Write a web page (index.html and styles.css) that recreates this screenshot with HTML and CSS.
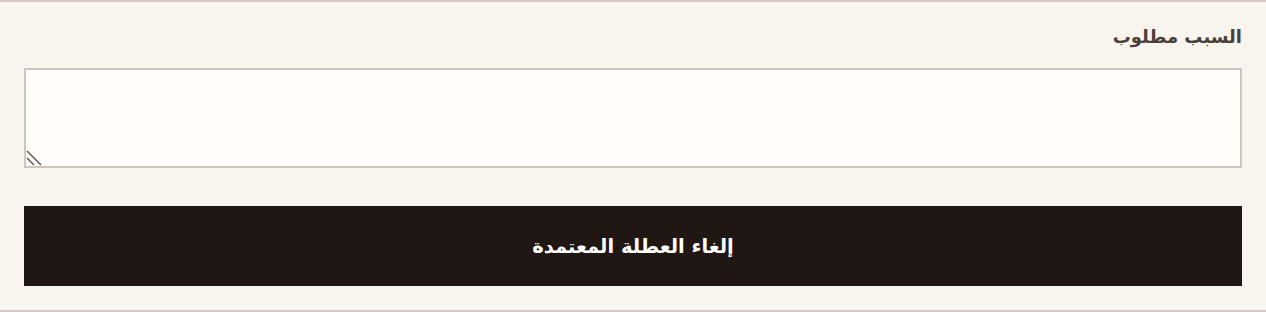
FILE: index.html
```html
<!DOCTYPE html>
<html lang="ar" dir="rtl">
<head>
  <meta charset="UTF-8" />
  <title>إلغاء العطلة</title>
  <meta name="viewport" content="width=device-width, initial-scale=1.0" />
  <link rel="stylesheet" href="styles.css">
</head>
<body>

  <div class="cancel-panel">
    <label class="reason-label" for="reason">السبب مطلوب</label>
    <div class="reason-wrap">
      <textarea id="reason" class="reason-input"></textarea>
      <!-- resize grip -->
      <svg class="grip" width="16" height="16" viewBox="0 0 16 16">
        <line x1="1" y1="1" x2="15" y2="15" stroke="#555" stroke-width="1.4" />
        <line x1="1" y1="8" x2="8" y2="15" stroke="#555" stroke-width="1.4" />
      </svg>
    </div>
    <button class="cancel-btn">إلغاء العطلة المعتمدة</button>
  </div>

</body>
</html>
```

FILE: styles.css
```css
body {
  margin: 0;
  background-color: #f8f4ee;
  font-family: 'DejaVu Sans', sans-serif;
}
.cancel-panel {
  border-top: 2px solid #d8c8c4;
  border-bottom: 2px solid #d2cac6;
  padding: 24px;
  background-color: #f8f4ee;
}
.reason-label {
  display: block;
  font-size: 18px;
  font-weight: bold;
  line-height: 22px;
  color: #4a403a;
  margin-bottom: 20px;
}
.reason-wrap {
  position: relative;
  margin-bottom: 38px;
}
.reason-input {
  display: block;
  box-sizing: border-box;
  width: 100%;
  height: 100px;
  margin: 0;
  border: 2px solid #cdc5c0;
  background-color: #fffcfa;
  font-family: inherit;
  font-size: 16px;
  resize: none;
}
.grip {
  position: absolute;
  left: 2px;
  bottom: 2px;
  pointer-events: none;
}
.cancel-btn {
  display: block;
  width: 100%;
  height: 80px;
  border: none;
  background-color: #201714;
  color: #fff;
  font-family: inherit;
  font-size: 19.5px;
  font-weight: bold;
  cursor: pointer;
}
```
